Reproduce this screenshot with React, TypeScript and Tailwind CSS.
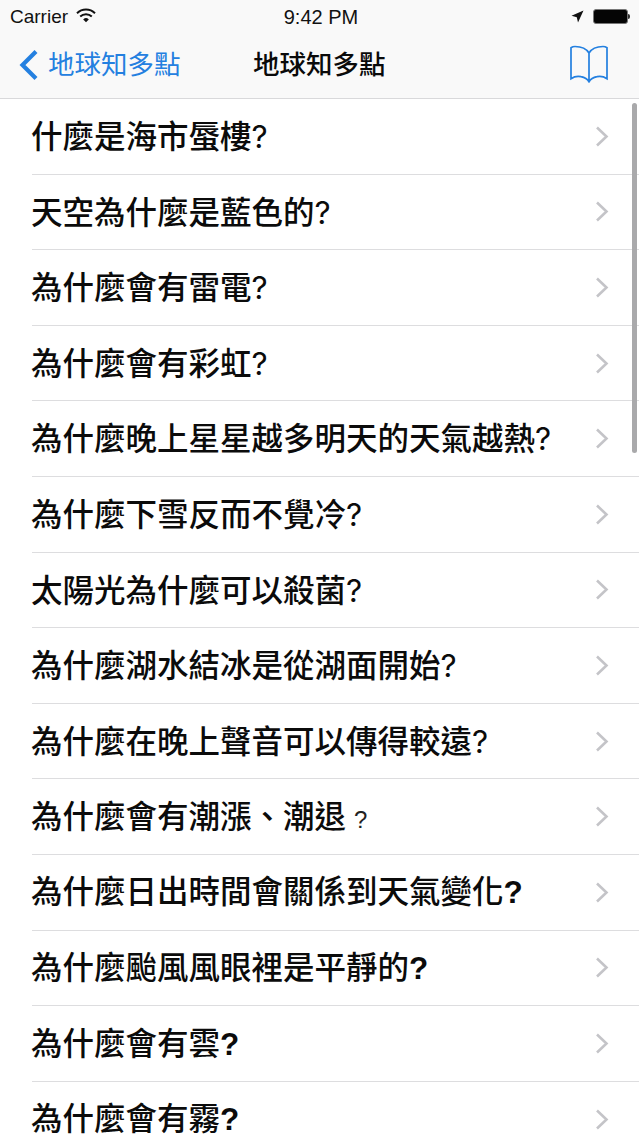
const cjk = "font-['Liberation_Sans','Noto_Sans_CJK_TC',sans-serif]";

const questions: { text: string; mark: string; bold?: boolean }[] = [
  { text: "什麼是海市蜃樓", mark: "?" },
  { text: "天空為什麼是藍色的", mark: "?" },
  { text: "為什麼會有雷電", mark: "?" },
  { text: "為什麼會有彩虹", mark: "?" },
  { text: "為什麼晚上星星越多明天的天氣越熱", mark: "?" },
  { text: "為什麼下雪反而不覺冷", mark: "?" },
  { text: "太陽光為什麼可以殺菌", mark: "?" },
  { text: "為什麼湖水結冰是從湖面開始", mark: "?" },
  { text: "為什麼在晚上聲音可以傳得較遠", mark: "?" },
  { text: "為什麼會有潮漲、潮退", mark: "small" },
  { text: "為什麼日出時間會關係到天氣變化", mark: "?", bold: true },
  { text: "為什麼颱風風眼裡是平靜的", mark: "?", bold: true },
  { text: "為什麼會有雲", mark: "?", bold: true },
  { text: "為什麼會有霧", mark: "?", bold: true },
];

const StatusBar = () => (
  <div className="h-[33px] flex items-center justify-between pl-[10px] pr-[9px] text-[19px] text-[#111]">
    <div className="flex items-center gap-[8px] w-[150px]">
      <span className="leading-none">Carrier</span>
      <svg width="20" height="15" viewBox="0 0 20 15" className="mt-[-3px]">
        <path d="M1 5.2a13 13 0 0 1 18 0" fill="none" stroke="#111" strokeWidth="2" />
        <path d="M4.2 8.6a8.5 8.5 0 0 1 11.6 0" fill="none" stroke="#111" strokeWidth="2" />
        <path d="M7.2 11.4a4 4 0 0 1 5.6 0L10 14.2z" fill="#111" />
      </svg>
    </div>
    <span className="ml-[2px] text-[20px] font-medium leading-none">9:42 PM</span>
    <div className="flex items-center justify-end gap-[9px] w-[150px]">
      <svg width="13" height="13" viewBox="0 0 13 13">
        <path d="M12.5.5 7 12.5 5.8 7.2.5 5.8z" fill="#111" />
      </svg>
      <div className="flex items-center">
        <div className="w-[35px] h-[15px] rounded-[3px] bg-[#050505] border border-[#777]" />
        <div className="w-[2px] h-[5px] bg-[#333] rounded-r-sm" />
      </div>
    </div>
  </div>
);

const NavBar = () => (
  <div className="relative h-[66px] flex items-center justify-between pl-[19px] pr-[30px] border-b border-[#d9d9db]">
    <div className="flex items-center gap-[9px] text-[#2480e0] text-[26.500px] mt-[-1px]">
      <svg width="20" height="32" viewBox="0 0 20 32">
        <path d="M17 2.5 3.5 16 17 29.5" fill="none" stroke="#2480e0" strokeWidth="4.2" />
      </svg>
      <span className="leading-none">地球知多點</span>
    </div>
    <span className="absolute left-[253px] top-[19px] text-[26.500px] leading-none font-medium text-[#0a0a0a]">地球知多點</span>
    <svg width="40" height="38" viewBox="0 0 40 38" className="mt-[-4px]">
      <path
        d="M20 8C17 3 11 1.500 6 1.500c-1.500 0-3 .5-4 1.200v31c3-2 7-2.700 10-2 4 .8 6.500 2.500 8 5 1.500-2.500 4-4.200 8-5 3-.7 7 0 10 2v-31c-1-.7-2.500-1.200-4-1.200C29 1.500 23 3 20 8zm0 0v29"
        fill="none"
        stroke="#2480e0"
        strokeWidth="1.700"
      />
    </svg>
  </div>
);

const Row = ({ text, mark, bold }: { text: string; mark: string; bold?: boolean }) => (
  <div className="h-[75.6px] pl-[32px] shrink-0">
    <div className="h-full flex items-center justify-between pr-[30px] border-b border-[#dddddf]">
      <span className="ml-[-1px] mt-[2px] text-[31.5px] leading-none font-medium text-[#0b0b0b] whitespace-nowrap">
        {text}
        {mark === "small" ? (
          <span className="ml-[8px] text-[24px] font-normal text-[#222]">?</span>
        ) : (
          <span className={bold ? "font-bold" : "font-['Inter'] font-normal"}>{mark}</span>
        )}
      </span>
      <svg width="14" height="21" viewBox="0 0 14 21" className="shrink-0">
        <path d="M2 1.500l9.500 9-9.500 9" fill="none" stroke="#c4c4c8" strokeWidth="2.600" />
      </svg>
    </div>
  </div>
);

export default function App() {
  return (
    <div className={`${cjk} relative w-[639px] h-[1136px] overflow-hidden bg-white`}>
      <div className="bg-[#f9f9f9]">
        <StatusBar />
        <NavBar />
      </div>
      <div className="flex flex-col">
        {questions.map((q) => (
          <Row key={q.text} {...q} />
        ))}
      </div>
      {/* scroll indicator */}
      <div className="absolute right-[2px] top-[103px] w-[5px] h-[350px] rounded-full bg-[#a9a9ab]" />
    </div>
  );
}
